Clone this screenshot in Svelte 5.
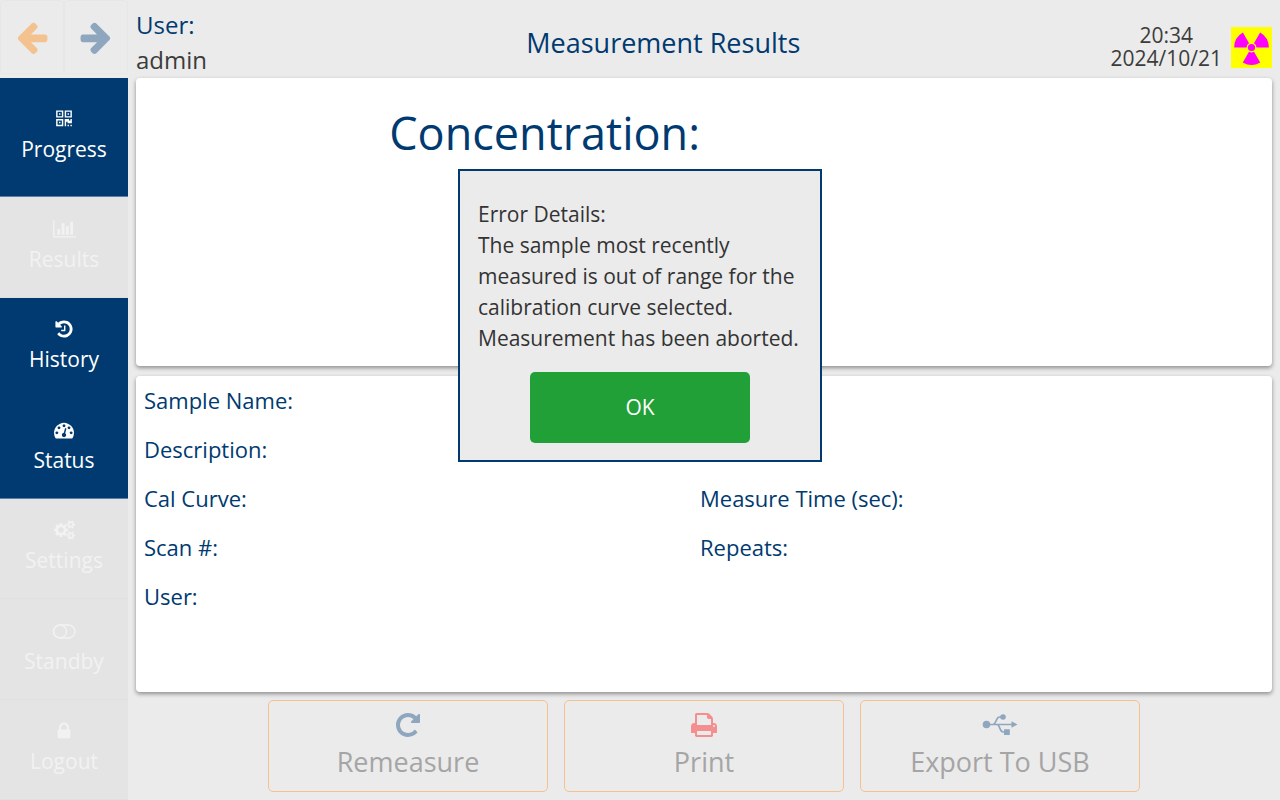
<script>
  let dialogOpen = $state(true);

  const navItems = [
    { label: 'Progress', icon: 'qrcode', active: true, tall: true, line: true },
    { label: 'Results', icon: 'chart', active: false },
    { label: 'History', icon: 'history', active: true },
    { label: 'Status', icon: 'gauge', active: true, line: true },
    { label: 'Settings', icon: 'cogs', active: false },
    { label: 'Standby', icon: 'toggle', active: false },
    { label: 'Logout', icon: 'lock', active: false }
  ];

  const details = [
    ['Sample Name:'],
    ['Description:'],
    ['Cal Curve:', 'Measure Time (sec):'],
    ['Scan #:', 'Repeats:'],
    ['User:']
  ];

  const actions = [
    { label: 'Remeasure', icon: 'repeat' },
    { label: 'Print', icon: 'print' },
    { label: 'Export To USB', icon: 'usb' }
  ];

  const smallCog =
    'v140q0 16-149 31-12 27-30 52 51 113 51 138 0 4-4 7-122 71-124 71-8 0-46-47t-52-68q-20 2-30 2t-30-2q-14 21-52 68t-46 47q-2 0-124-71-4-3-4-7 0-25 51-138-18-25-30-52-149-15-149-31v-140q0-16 149-31 13-29 30-52-51-113-51-138 0-4 4-7 4-2 35-20t59-34 30-16q8 0 46 46.500t52 67.500q20-2 30-2t30 2q51-71 92-112l6-2q4 0 124 70 4 3 4 7 0 25-51 138 17 23 30 52 149 15 149 31z';

  const icons = {
    left: {
      w: 1792,
      d: 'M1664 896v128q0 53-32.500 90.500t-84.500 37.500h-704l293 294q38 36 38 90t-38 90l-75 76q-37 37-90 37-52 0-91-37l-651-652q-37-37-37-90 0-52 37-91l651-650q38-38 91-38 52 0 90 38l75 74q38 38 38 91t-38 91l-293 293h704q52 0 84.500 37.500t32.500 90.500z'
    },
    right: {
      w: 1792,
      d: 'M1600 960q0 54-37 91l-651 651q-39 37-91 37-51 0-90-37l-75-75q-38-38-38-91t38-91l293-293h-704q-52 0-84.500-37.500t-32.500-90.500v-128q0-53 32.500-90.500t84.500-37.500h704l-293-294q-38-36-38-90t38-90l75-75q38-38 90-38 53 0 91 38l651 651q37 35 37 90z'
    },
    qrcode: {
      w: 1792,
      d: 'M576 1152v128h-128v-128h128zm0-768v128h-128v-128h128zm768 0v128h-128v-128h128zm-1024 1023h384v-383h-384v383zm0-767h384v-384h-384v384zm768 0h384v-384h-384v384zm-256 256v640h-640v-640h640zm512 512v128h-128v-128h128zm256 0v128h-128v-128h128zm0-512v384h-384v-128h-128v384h-128v-640h384v128h128v-128h128zm-768-768v640h-640v-640h640zm768 0v640h-640v-640h640z'
    },
    chart: {
      w: 2048,
      d: 'M640 896v512h-256v-512h256zm384-512v1024h-256v-1024h256zm1024 1152v128h-2048v-1536h128v1408h1920zm-640-896v768h-256v-768h256zm384-384v1152h-256v-1152h256z'
    },
    history: {
      w: 1792,
      d: 'M1664 896q0 156-61 298t-164 245-245 164-298 61q-172 0-327-72.500t-264-204.500q-7-10-6.500-22.500t8.500-20.500l137-138q10-9 25-9 16 2 23 12 73 95 179 147t225 52q104 0 198.500-40.500t163.500-109.500 109.500-163.500 40.500-198.500-40.500-198.500-109.500-163.500-163.500-109.500-198.500-40.500q-98 0-188 35.500t-160 101.500l137 138q31 30 14 69-17 40-59 40h-448q-26 0-45-19t-19-45v-448q0-42 40-59 39-17 69 14l130 129q107-101 244.500-156.500t284.500-55.500q156 0 298 61t245 164 164 245 61 298zm-640-288v448q0 14-9 23t-23 9h-320q-14 0-23-9t-9-23v-64q0-14 9-23t23-9h224v-352q0-14 9-23t23-9h64q14 0 23 9t9 23z'
    },
    gauge: {
      w: 1792,
      d: 'M384 1152q0-53-37.500-90.500t-90.500-37.500-90.500 37.500-37.500 90.500 37.500 90.500 90.500 37.500 90.500-37.500 37.500-90.500zm192-448q0-53-37.500-90.500t-90.500-37.500-90.500 37.500-37.500 90.500 37.500 90.500 90.500 37.500 90.500-37.500 37.500-90.500zm428 481l101-382q6-26-7.500-48.500t-38.500-29.500-48 6.500-30 39.500l-101 382q-60 5-107 43.500t-63 98.500q-20 77 20 146t117 89 146-20 89-117q16-60-6-117t-72-91zm660-33q0-53-37.500-90.500t-90.500-37.500-90.500 37.500-37.500 90.500 37.500 90.500 90.500 37.500 90.500-37.500 37.500-90.500zm-640-640q0-53-37.500-90.500t-90.500-37.500-90.500 37.500-37.500 90.500 37.500 90.500 90.500 37.500 90.500-37.500 37.500-90.500zm448 192q0-53-37.500-90.500t-90.500-37.500-90.500 37.500-37.500 90.500 37.500 90.500 90.500 37.500 90.500-37.500 37.500-90.500zm320 448q0 261-141 483-19 29-54 29h-1402q-35 0-54-29-141-221-141-483 0-182 71-348t191-286 286-191 348-71 348 71 286 191 191 286 71 348z'
    },
    cogs: {
      w: 1920,
      d:
        'M896 896q0-106-75-181t-181-75-181 75-75 181 75 181 181 75 181-75 75-181zm768 512q0-52-38-90t-90-38-90 38-38 90q0 53 37.500 90.500t90.500 37.500 90.500-37.500 37.500-90.500zm0-1024q0-52-38-90t-90-38-90 38-38 90q0 53 37.500 90.500t90.500 37.500 90.500-37.500 37.500-90.500zm-384 421v185q0 10-7 19.500t-16 10.500l-155 24q-11 35-32 76 34 48 90 115 7 11 7 20 0 12-7 19-23 30-82.500 89.500t-78.500 59.500q-11 0-21-7l-115-90q-37 19-77 31-11 108-23 155-7 24-30 24h-186q-11 0-20-7.500t-10-17.500l-23-153q-34-10-75-31l-118 89q-7 7-20 7-11 0-21-8-144-133-144-160 0-9 7-19 10-14 41-53t47-61q-23-44-35-82l-152-24q-10-1-17-9.500t-7-19.500v-185q0-10 7-19.500t16-10.500l155-24q11-35 32-76-34-48-90-115-7-11-7-20 0-12 7-20 22-30 82-89t79-59q11 0 21 7l115 90q34-18 77-32 11-108 23-154 7-24 30-24h186q11 0 20 7.500t10 17.500l23 153q34 10 75 31l118-89q8-7 20-7 11 0 21 8 144 133 144 160 0 8-7 19-12 16-42 54t-45 60q23 48 34 82l152 23q10 2 17 10.500t7 19.500z' +
        `M1920 1338${smallCog}M1920 314${smallCog}`
    },
    lock: {
      w: 1792,
      d: 'M640 768h512v-192q0-106-75-181t-181-75-181 75-75 181v192zm832 96v576q0 40-28 68t-68 28h-960q-40 0-68-28t-28-68v-576q0-40 28-68t68-28h32v-192q0-184 132-316t316-132 316 132 132 316v192h32q40 0 68 28t28 68z'
    },
    repeat: {
      w: 1792,
      d: 'M1664 256v448q0 26-19 45t-45 19h-448q-42 0-59-40-17-39 14-69l138-138q-148-137-349-137-104 0-198.500 40.500t-163.500 109.500-109.500 163.500-40.500 198.500 40.500 198.500 109.500 163.500 163.500 109.500 198.500 40.500q119 0 225-52t179-147q7-10 23-12 15 0 25 9l137 138q9 8 9.500 20.500t-7.500 22.500q-109 132-264 204.500t-327 72.500q-156 0-298-61t-245-164-164-245-61-298 61-298 164-245 245-164 298-61q147 0 284.500 55.500t244.500 156.500l130-129q29-31 70-14 39 17 39 59z'
    },
    print: {
      w: 1792,
      d: 'M448 1536h896v-256h-896v256zm0-640h896v-384h-160q-40 0-68-28t-28-68v-160h-640v640zm1152 64q0-26-19-45t-45-19-45 19-19 45 19 45 45 19 45-19 19-45zm128 0v416q0 13-9.500 22.500t-22.500 9.500h-224v160q0 40-28 68t-68 28h-960q-40 0-68-28t-28-68v-160h-224q-13 0-22.500-9.500t-9.500-22.500v-416q0-79 56.500-135.500t135.500-56.500h64v-544q0-40 28-68t68-28h672q40 0 88 20t76 48l152 152q28 28 48 76t20 88v256h64q79 0 135.500 56.500t56.500 135.500z'
    }
  };
</script>

{#snippet icon(name, size)}
  {#if name === 'toggle'}
    <svg class="icon" width="24" height={size} viewBox="0 0 24 20" aria-hidden="true">
      <g fill="none" stroke="currentColor" stroke-width="1.4">
        <rect x="1.500" y="4" width="21.500" height="13" rx="6.500" />
        <circle cx="8" cy="10.500" r="6.500" />
      </g>
    </svg>
  {:else if name === 'usb'}
    <svg class="icon" width="36" height={size} viewBox="0 0 36 28" aria-hidden="true">
      <g fill="none" stroke="currentColor" stroke-width="1.700">
        <path d="M4 13.500H30M11 13.500C14 13.500 14 6 17.500 6H20M15 13.500C18 13.500 17.500 21 21 21H23" />
      </g>
      <g fill="currentColor">
        <circle cx="4.500" cy="13.500" r="3.800" />
        <circle cx="21" cy="6" r="2.800" />
        <path d="M22 18.200h5.800v5.800h-5.800zM29.500 10.200l6 3.300-6 3.300z" />
      </g>
    </svg>
  {:else}
    <svg
      class="icon"
      width={Math.round((size * icons[name].w) / 1792)}
      height={size}
      viewBox="0 0 {icons[name].w} 1792"
      aria-hidden="true"
    >
      <path fill="currentColor" d={icons[name].d} />
    </svg>
  {/if}
{/snippet}

<div class="screen">
  <aside class="side">
    <div class="history-nav">
      <button class="back" disabled aria-label="Back">{@render icon('left', 36)}</button>
      <button class="forward" disabled aria-label="Forward">{@render icon('right', 36)}</button>
    </div>
    <nav>
      {#each navItems as item}
        <button class="nav-item" class:active={item.active} class:tall={item.tall} class:line={item.line} disabled={!item.active}>
          {@render icon(item.icon, 20)}
          <span>{item.label}</span>
        </button>
      {/each}
    </nav>
  </aside>

  <div class="page">
    <header>
      <div class="user">
        <div class="user-label">User:</div>
        <div>admin</div>
      </div>
      <h1>Measurement Results</h1>
      <div class="status">
        <div class="clock">20:34<br />2024/10/21</div>
        <svg class="radiation" width="41" height="41" viewBox="0 0 41 41" role="img" aria-label="Radiation">
          <rect width="41" height="41" fill="#ff0" />
          <g fill="#f0f">
            <circle cx="20.500" cy="20.500" r="3.600" />
            <path id="blade" d="M18 24.800L11.800 35.500A17.400 17.400 0 0 0 29.200 35.500L23 24.800A5 5 0 0 1 18 24.800z" />
            <use href="#blade" transform="rotate(120 20.500 20.500)" />
            <use href="#blade" transform="rotate(240 20.500 20.500)" />
          </g>
        </svg>
      </div>
    </header>

    <main>
      <section class="card result">
        <h2>Concentration:</h2>
      </section>
      <section class="card details">
        {#each details as row}
          <div class="row">
            {#each row as label}
              <span>{label}</span>
            {/each}
          </div>
        {/each}
      </section>
    </main>

    <footer>
      {#each actions as action}
        <button class="action {action.icon}" disabled>
          {@render icon(action.icon, 28)}
          <span>{action.label}</span>
        </button>
      {/each}
    </footer>
  </div>
</div>

{#if dialogOpen}
  <div class="overlay">
    <div class="dialog" role="alertdialog" aria-modal="true" aria-labelledby="dialog-title" aria-describedby="dialog-text">
      <div id="dialog-title">Error Details:</div>
      <p id="dialog-text">
        The sample most recently measured is out of range for the calibration curve selected. Measurement has been aborted.
      </p>
      <button class="ok" onclick={() => (dialogOpen = false)}>OK</button>
    </div>
  </div>
{/if}

<style>
  :global(body) {
    background: #ebebeb;
    color: #3c3c3c;
    font-family: 'Open Sans', 'Noto Sans', sans-serif;
  }
  button {
    margin: 0;
    padding: 0;
    border: 0;
    background: none;
    color: inherit;
    font: inherit;
  }
  h1,
  h2,
  p {
    margin: 0;
    font-weight: 400;
  }
  .icon {
    display: block;
  }
  .screen {
    display: flex;
    height: 100vh;
  }

  .side {
    display: flex;
    flex-direction: column;
    flex: none;
    width: 128px;
  }
  .history-nav {
    display: grid;
    grid-template-columns: 1fr 1fr;
    height: 74px;
    padding-bottom: 4px;
  }
  .history-nav button {
    display: grid;
    place-items: center;
    border: 1px solid #e7e7e7;
    border-radius: 4px;
  }
  .back { color: #f3c28f; }
  .forward { color: #8fa6bf; }
  nav {
    display: flex;
    flex: 1;
    flex-direction: column;
  }
  .nav-item {
    display: flex;
    flex: 1;
    flex-direction: column;
    align-items: center;
    justify-content: center;
    gap: 4px;
    border-bottom: 1px solid #e0e0e0;
    background: #e4e4e4;
    color: #f2f2f2;
    font-size: 21px;
    line-height: 32px;
  }
  .nav-item.active {
    border-color: #003a70;
    background: #003a70;
    color: #fff;
  }
  .nav-item.tall {
    flex: none;
    height: 119px;
  }
  .nav-item.line {
    border-color: #5b7eaa;
  }

  .page {
    display: flex;
    flex: 1;
    flex-direction: column;
    padding: 0 8px 8px;
  }
  header {
    display: flex;
    align-items: center;
    justify-content: space-between;
    height: 78px;
  }
  .user {
    min-width: 80px;
    padding-top: 6px;
    font-size: 24px;
    line-height: 35px;
  }
  .user-label,
  h1,
  h2 {
    color: #003a70;
  }
  h1 {
    padding-top: 8px;
    font-size: 27px;
    line-height: 36px;
  }
  .status {
    display: flex;
    align-items: center;
    gap: 9px;
    padding-top: 16px;
  }
  .clock {
    font-size: 21px;
    line-height: 23px;
    text-align: center;
  }

  main {
    display: grid;
    flex: 1;
    grid-template-rows: 10fr 11fr;
    gap: 10px;
  }
  .card {
    padding: 0 16px 0 8px;
    border-radius: 4px;
    background: #fff;
    box-shadow: 0 2px 4px rgba(0, 0, 0, 0.4);
  }
  .result {
    display: grid;
    grid-template-columns: 1fr 1fr;
    align-items: start;
    padding-top: 23px;
  }
  .result h2 {
    font-size: 45px;
    line-height: 64px;
    text-align: right;
  }
  .details {
    color: #003a70;
    font-size: 22px;
    line-height: 49px;
  }
  .row {
    display: grid;
    grid-template-columns: 1fr 1fr;
  }

  footer {
    display: flex;
    justify-content: center;
    gap: 16px;
    padding-top: 8px;
  }
  .action {
    display: flex;
    flex-direction: column;
    align-items: center;
    gap: 1px;
    width: 280px;
    height: 92px;
    padding-top: 10px;
    border: 1px solid #f3c28f;
    border-radius: 5px;
    color: #8fa6bf;
    font-size: 27px;
    line-height: 44px;
  }
  .action.print { color: #f58f8f; }
  .action span { color: #a5a5a5; }

  .overlay {
    position: fixed;
    inset: 0;
    display: grid;
    place-items: start center;
    padding-top: 169px;
  }
  .dialog {
    width: 324px;
    padding: 28px 18px 17px;
    border: 2px solid #003a70;
    background: #ebebeb;
    color: #333;
    font-size: 21px;
    line-height: 31px;
  }
  .ok {
    display: block;
    width: 220px;
    height: 71px;
    margin: 18px auto 0;
    border-radius: 5px;
    background: #22a038;
    color: #fff;
  }
</style>
